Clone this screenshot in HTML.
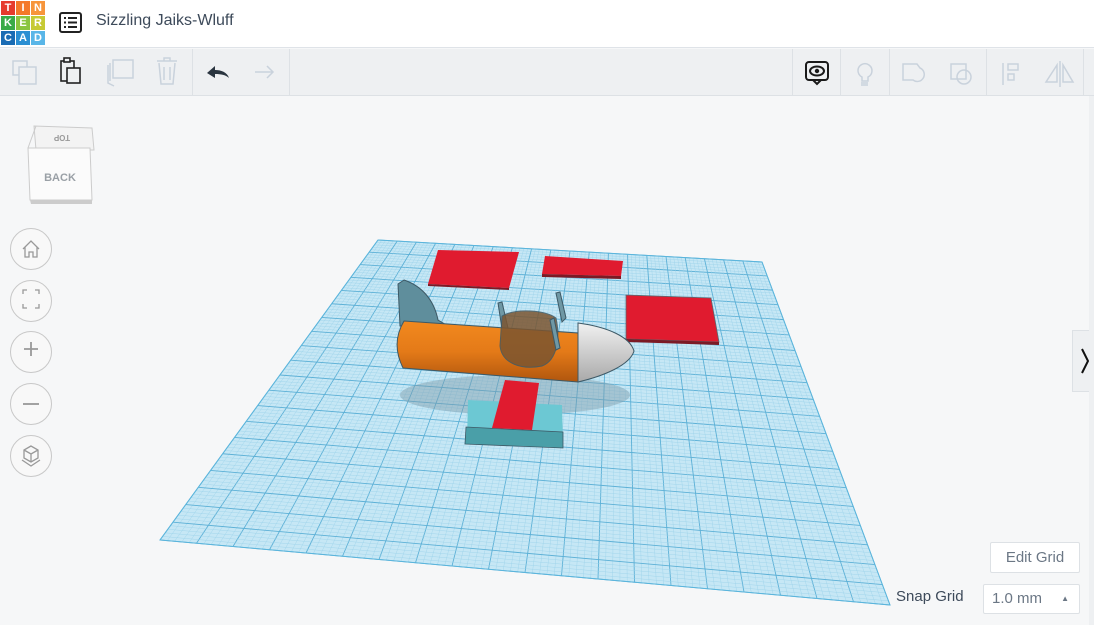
<!DOCTYPE html>
<html><head><meta charset="utf-8">
<style>
*{margin:0;padding:0;box-sizing:border-box}
body{width:1094px;height:625px;overflow:hidden;background:#f6f7f8;font-family:"Liberation Sans",sans-serif;position:relative}
.hdr{position:absolute;left:0;top:0;width:1094px;height:48px;background:#fff;border-bottom:1px solid #dfe3e8}
.logo{position:absolute;left:1px;top:1px;display:grid;grid-template-columns:repeat(3,14px);grid-gap:1px}
.logo div{width:14px;height:14px;color:#fff;font:bold 11px "Liberation Sans",sans-serif;text-align:center;line-height:14px}
.title{position:absolute;left:96px;top:12px;font-size:16px;color:#3d4a5a}
.tb{position:absolute;left:0;top:49px;width:1094px;height:47px;background:#eef0f2;border-bottom:1px solid #dde1e5}
.sep{position:absolute;top:49px;width:1px;height:47px;background:#dde1e5}
.side{position:absolute;left:10px;width:42px;height:42px;border:1px solid #c8c8c8;border-radius:50%;background:#f8f8f8}
.btn{position:absolute;background:#fff;border:1px solid #dde1e5;border-radius:2px;color:#6b7785;font-size:15px}
</style></head><body>
<div class="hdr">
 <div class="logo">
  <div style="background:#e63b2e">T</div><div style="background:#f4792a">I</div><div style="background:#f7953b">N</div>
  <div style="background:#3aab48">K</div><div style="background:#8ac53f">E</div><div style="background:#c6ca35">R</div>
  <div style="background:#1a6cb4">C</div><div style="background:#2b8fd3">A</div><div style="background:#59b6e8">D</div>
 </div>
 <svg style="position:absolute;left:59px;top:12px" width="23" height="21"><rect x="1" y="1" width="21" height="19" rx="2" fill="none" stroke="#222" stroke-width="2"/><g fill="#222"><rect x="5" y="5" width="2" height="2"/><rect x="9" y="5" width="9" height="2"/><rect x="5" y="9.5" width="2" height="2"/><rect x="9" y="9.5" width="9" height="2"/><rect x="5" y="14" width="2" height="2"/><rect x="9" y="14" width="9" height="2"/></g></svg>
 <div class="title">Sizzling Jaiks-Wluff</div>
</div>
<div class="tb"></div>
<div class="sep" style="left:192px"></div><div class="sep" style="left:289px"></div>
<div class="sep" style="left:840px"></div><div class="sep" style="left:889px"></div><div class="sep" style="left:986px"></div><div class="sep" style="left:1083px"></div>
<div class="sep" style="left:792px"></div>
<svg style="position:absolute;left:0;top:49px" width="1094" height="47">
 <g fill="none" stroke="#c9d2dc" stroke-width="1.5">
  <rect x="13" y="12" width="14" height="14"/><rect x="19" y="18" width="17" height="17" fill="#eef0f2"/>
  <rect x="113" y="11" width="20" height="18"/><path d="M108 16v18l6 3M110 14l0 18"/>
  <path d="M157 12h20M164 12v-3h6v3M159 14l2 21h12l2-21M164 18v13M170 18v13"/>
  <path d="M255 23h18M267 17l6 6-6 6"/>
 </g>
 <g fill="none" stroke="#222" stroke-width="1.6">
  <rect x="61" y="12" width="13" height="20"/><rect x="67" y="19" width="13" height="15" fill="#eef0f2"/><rect x="64" y="9" width="6" height="4" fill="#eef0f2"/>
 </g>
 <path d="M207 24l8-7v4c6 0 12 2 14 8-3-3-8-4-14-4v4z" fill="#2a3540"/>
 <g fill="none" stroke="#c9d2dc" stroke-width="1.5">
  <path d="M858 21a7 7 0 1 1 10 7v4h-6v-4a7 7 0 0 1-4-7zM861 34h7M861 36h7"/>
  <path d="M903 15h14l3 4a7 7 0 1 1-7 12h-10z"/>
  <rect x="951" y="15" width="15" height="15"/><circle cx="964" cy="28" r="7"/>
  <path d="M1003 14v22M1008 15h10v6h-10zM1008 25h6v6h-6z"/>
  <path d="M1060 12v26M1057 16l-11 17h11zM1063 16l10 17h-10z"/>
 </g>
 <rect x="806" y="13" width="22" height="18" rx="3" fill="none" stroke="#1a1a1a" stroke-width="2"/>
 <path d="M813 31l4 4 4-4" fill="none" stroke="#1a1a1a" stroke-width="2"/>
 <ellipse cx="817" cy="22" rx="7" ry="4.5" fill="none" stroke="#1a1a1a" stroke-width="2"/><circle cx="817" cy="22" r="2.2" fill="#1a1a1a"/>
</svg>

<svg style="position:absolute;left:22px;top:118px" width="80" height="90">
 <path d="M12 8l58 2 2 22-58 0z" fill="#f3f3f3" stroke="#ccc"/>
 <path d="M6 30h62l2 52-62 0z" fill="#fbfbfb" stroke="#ccc"/>
 <path d="M6 30l8-22" stroke="#ccc"/>
 <path d="M8 82h62v4H9z" fill="#ccc"/>
 <text x="40" y="23" font-size="8" font-weight="bold" fill="#999" text-anchor="middle" transform="rotate(180 40 20)" font-family="Liberation Sans">TOP</text>
 <text x="38" y="63" font-size="11" font-weight="bold" fill="#9aa0a6" text-anchor="middle" font-family="Liberation Sans">BACK</text>
</svg>
<div class="side" style="top:228px"></div><div class="side" style="top:280px"></div><div class="side" style="top:331px"></div><div class="side" style="top:383px"></div><div class="side" style="top:435px"></div>
<svg style="position:absolute;left:10px;top:228px" width="42" height="250" fill="none" stroke="#999" stroke-width="1.3">
 <path d="M13 21l8-8 8 8M15 19v10h4v-5h4v5h4V19"/>
 <path d="M13 66v-4h4M25 62h4v4M29 76v4h-4M17 80h-4v-4"/>
 <path d="M21 114v14M14 121h14" stroke-width="1.8"/>
 <path d="M13 176h16" stroke-width="1.8"/>
 <path d="M21 218l-7 4v8l7 4 7-4v-8zM14 222l7 4 7-4M21 226v8M12 232l9 6 9-6"/>
</svg>

<svg id="g" style="position:absolute;left:0;top:0" width="1094" height="625">
 <polygon points="378,240 762,262 890,605 160,540" fill="#c6e7f5"/>
 <g id="lines"></g>
 <polygon points="378,240 762,262 890,605 160,540" fill="none" stroke="#5bb5dc" stroke-width="1"/>
 <ellipse cx="515" cy="395" rx="115" ry="20" fill="#7a9aa8" opacity=".45"/>
 <polygon points="438,250 519,252 509,288 428,284" fill="#e01b2f"/><polygon points="428,284 509,288 509,290 428,286" fill="#7b1a25"/>
 <polygon points="545,256 623,261 621,276 542,274" fill="#e01b2f"/><polygon points="542,274 621,276 621,279 542,277" fill="#7b1a25"/>
 <polygon points="626,295 711,298 719,342 626,339" fill="#e01b2f" stroke="#5a6a72" stroke-width=".8"/><polygon points="626,339 719,342 719,345 626,342" fill="#7b1a25"/>
 <path d="M400 326l-2-42 6-4c18 6 30 20 34 40l10 6z" fill="#5f8e9c" stroke="#3d5966" stroke-width="1"/>
 <path d="M498 303l4-1 6 26-6 1z" fill="#6f98a5" stroke="#3d5966"/>
 <path d="M556 293l4-1 6 26-4 4z" fill="#6f98a5" stroke="#3d5966"/>
 <defs><linearGradient id="or" x1="0" y1="0" x2="0" y2="1"><stop offset="0" stop-color="#f2891e"/><stop offset=".5" stop-color="#e47a18"/><stop offset="1" stop-color="#b0560e"/></linearGradient>
 <linearGradient id="gr" x1="0" y1="0" x2="0" y2="1"><stop offset="0" stop-color="#f1f1f1"/><stop offset="1" stop-color="#a9a9a9"/></linearGradient></defs>
 <path d="M404 321l174 12 0 49-175-14c-8-16-8-32 1-47z" fill="url(#or)" stroke="#3d5966" stroke-width="1"/>
 <path d="M502 316c14-8 44-6 54 2 4 18 2 42-14 48-20 4-40-2-42-20z" fill="#7b5530" opacity=".85" stroke="#3d5966"/>
 <path d="M550 320l4-2 6 30-4 2z" fill="#6f98a5" stroke="#3d5966"/>
 <path d="M578 323c30 4 52 14 56 28-4 14-30 25-56 31z" fill="url(#gr)" stroke="#3d5966" stroke-width="1"/>
 <polygon points="468,400 562,405 563,444 467,440" fill="#6cc8d3"/>
 <polygon points="466,427 563,432 563,448 465,444" fill="#4a9fa8" stroke="#3d5966" stroke-width=".8"/>
 <polygon points="505,380 539,383 532,430 492,428" fill="#e01b2f"/>
</svg>
<script>
(function(){
var A=[378,240],B=[762,262],C=[890,605],D=[160,540];
function P(u,v){var vv=v*(0.8+0.2*v);
 var tx=A[0]+(B[0]-A[0])*u, ty=A[1]+(B[1]-A[1])*u;
 var bx=D[0]+(C[0]-D[0])*u, by=D[1]+(C[1]-D[1])*u;
 return [tx+(bx-tx)*vv, ty+(by-ty)*vv];}
var s='',N=100;
for(var i=0;i<=N;i++){var t=i/N;var major=i%5==0;
 var st=major?'stroke="#5cb0d6" stroke-width="0.9"':'stroke="#9ad2ea" stroke-width="0.4"';
 var p=P(t,0),q=P(t,1);s+='<line x1="'+p[0]+'" y1="'+p[1]+'" x2="'+q[0]+'" y2="'+q[1]+'" '+st+'/>';
 p=P(0,t);q=P(1,t);s+='<line x1="'+p[0]+'" y1="'+p[1]+'" x2="'+q[0]+'" y2="'+q[1]+'" '+st+'/>';}
document.getElementById('lines').innerHTML=s;
})();
</script>

<div style="position:absolute;left:1072px;top:330px;width:22px;height:62px;background:#eef0f2;border:1px solid #dde1e5;border-right:none"></div>
<svg style="position:absolute;left:1080px;top:347px" width="10" height="28"><path d="M2 2l6 12-6 12" fill="none" stroke="#111" stroke-width="2"/></svg>
<div style="position:absolute;left:1089px;top:96px;width:5px;height:529px;background:#eef0f2"></div>
<div class="btn" style="left:990px;top:542px;width:90px;height:31px;line-height:29px;text-align:center">Edit Grid</div>
<div style="position:absolute;left:896px;top:588px;font-size:15px;color:#3d4a5a">Snap Grid</div>
<div class="btn" style="left:983px;top:584px;width:97px;height:30px;line-height:28px;padding-left:8px">1.0 mm<span style="position:absolute;right:10px;top:0;font-size:8px">▲</span></div>
</body></html>
